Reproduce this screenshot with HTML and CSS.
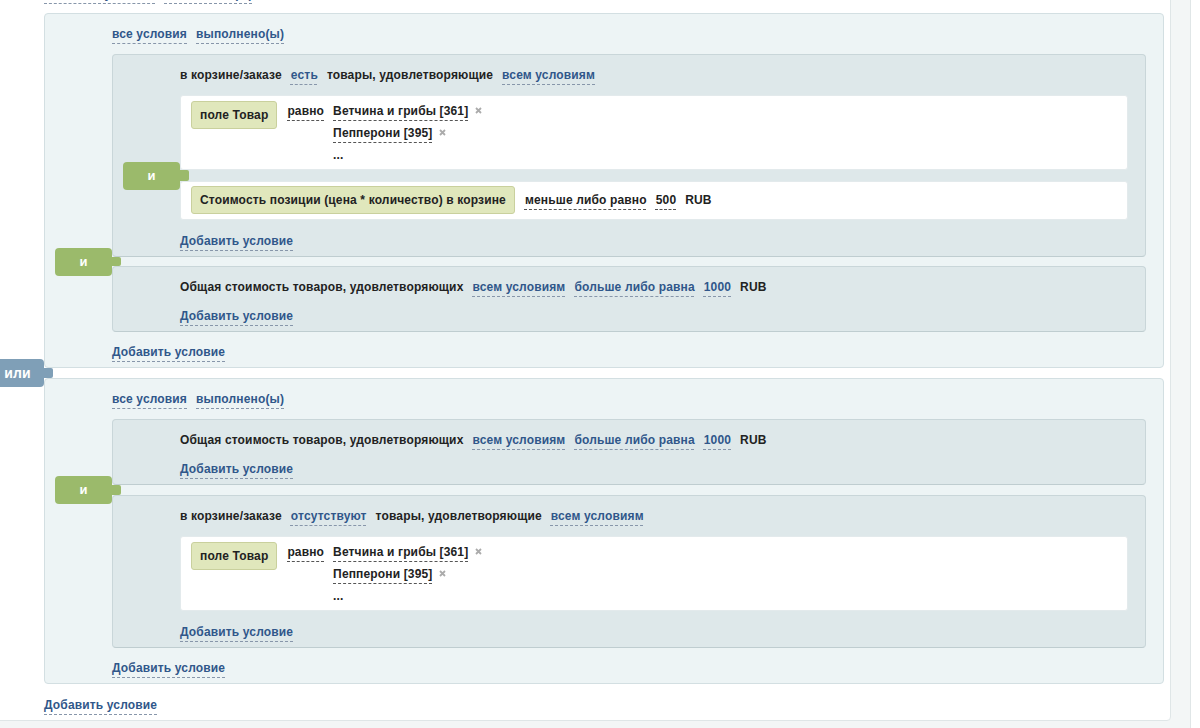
FILE: index.html
```html
<!DOCTYPE html>
<html lang="ru">
<head>
<meta charset="UTF-8">
<meta name="viewport" content="width=device-width, initial-scale=1.0">
<title>Условия правила работы с корзиной</title>
<link rel="stylesheet" href="styles.css">
</head>
<body>
<div class="page">
    <!-- top level: groups joined by "или" -->
    <div class="cond-root">
        <div class="cond-head">
            <span class="lnk">любое из условий</span>
            <span class="lnk">выполнено(ы)</span>
        </div>

        <!-- group 1 -->
        <div class="cond-group">
            <div class="cond-head">
                <span class="lnk">все условия</span>
                <span class="lnk">выполнено(ы)</span>
            </div>

            <div class="cond-box">
                <div class="cond-head">
                    <span>в корзине/заказе</span>
                    <span class="lnk">есть</span>
                    <span>товары, удовлетворяющие</span>
                    <span class="lnk">всем условиям</span>
                </div>
                <div class="leaf">
                    <span class="field">поле Товар</span>
                    <span class="op"><span class="dsh">равно</span></span>
                    <div class="values">
                        <div><span class="dsh">Ветчина и грибы [361]</span><svg class="del" width="7" height="7" viewBox="0 0 7 7"><path d="M1 1l5 5M6 1l-5 5"/></svg></div>
                        <div><span class="dsh">Пепперони [395]</span><svg class="del" width="7" height="7" viewBox="0 0 7 7"><path d="M1 1l5 5M6 1l-5 5"/></svg></div>
                        <div>...</div>
                    </div>
                </div>
                <div class="sep"><span class="logic">и</span></div>
                <div class="leaf leaf-line">
                    <span class="field">Стоимость позиции (цена * количество) в корзине</span>
                    <span class="dsh">меньше либо равно</span>
                    <span class="dsh">500</span>
                    <span>RUB</span>
                </div>
                <div class="cond-add"><span class="lnk">Добавить условие</span></div>
            </div>

            <div class="sep"><span class="logic">и</span></div>

            <div class="cond-box">
                <div class="cond-head">
                    <span>Общая стоимость товаров, удовлетворяющих</span>
                    <span class="lnk">всем условиям</span>
                    <span class="lnk">больше либо равна</span>
                    <span class="lnk">1000</span>
                    <span>RUB</span>
                </div>
                <div class="cond-add"><span class="lnk">Добавить условие</span></div>
            </div>

            <div class="cond-add"><span class="lnk">Добавить условие</span></div>
        </div>

        <div class="sep sep-or"><span class="logic">или</span></div>

        <!-- group 2 -->
        <div class="cond-group">
            <div class="cond-head">
                <span class="lnk">все условия</span>
                <span class="lnk">выполнено(ы)</span>
            </div>

            <div class="cond-box">
                <div class="cond-head">
                    <span>Общая стоимость товаров, удовлетворяющих</span>
                    <span class="lnk">всем условиям</span>
                    <span class="lnk">больше либо равна</span>
                    <span class="lnk">1000</span>
                    <span>RUB</span>
                </div>
                <div class="cond-add"><span class="lnk">Добавить условие</span></div>
            </div>

            <div class="sep sep-wide"><span class="logic">и</span></div>

            <div class="cond-box">
                <div class="cond-head">
                    <span>в корзине/заказе</span>
                    <span class="lnk">отсутствуют</span>
                    <span>товары, удовлетворяющие</span>
                    <span class="lnk">всем условиям</span>
                </div>
                <div class="leaf">
                    <span class="field">поле Товар</span>
                    <span class="op"><span class="dsh">равно</span></span>
                    <div class="values">
                        <div><span class="dsh">Ветчина и грибы [361]</span><svg class="del" width="7" height="7" viewBox="0 0 7 7"><path d="M1 1l5 5M6 1l-5 5"/></svg></div>
                        <div><span class="dsh">Пепперони [395]</span><svg class="del" width="7" height="7" viewBox="0 0 7 7"><path d="M1 1l5 5M6 1l-5 5"/></svg></div>
                        <div>...</div>
                    </div>
                </div>
                <div class="cond-add"><span class="lnk">Добавить условие</span></div>
            </div>

            <div class="cond-add"><span class="lnk">Добавить условие</span></div>
        </div>

        <div class="cond-add"><span class="lnk">Добавить условие</span></div>
    </div>
</div>
</body>
</html>
```

FILE: styles.css
```css
body {
    margin: 0;
    background: #fff;
    font-family: "Liberation Sans", Arial, Helvetica, sans-serif;
    font-size: 12px;
    font-weight: bold;
    letter-spacing: 0.15px;
    color: #222;
    overflow: hidden;
}

.page {
    width: 1190px;
    min-height: 780px;
    background: #f3f6f6;
    border-right: 1px solid #e0e6e7;
}

/* dashed "links" */
.lnk,
.dsh {
    text-decoration: underline dashed;
    text-decoration-thickness: 1px;
    text-underline-offset: 5px;
    text-decoration-skip-ink: none;
    white-space: nowrap;
}

.lnk {
    color: #30578a;
    text-decoration-color: #8796aa;
}

.dsh {
    color: #222;
    text-decoration-color: #555;
}

/* containers */
.cond-root {
    margin: -26px 19px 0 -24px;
    padding: 11px 6px 7px 67px;
    background: #fff;
    border: 1px solid #dfe6e7;
    border-radius: 4px;
}

.cond-group {
    padding: 12px 17px 7px 67px;
    background: #edf4f5;
    border: 1px solid #d3dfe2;
    border-radius: 4px;
}

.cond-box {
    padding: 12px 17px 7px 67px;
    background: #dee8ea;
    border: 1px solid #c9d6d9;
    border-bottom-color: #bfcdd0;
    border-radius: 4px;
}

.cond-head {
    display: flex;
    gap: 9px;
    height: 16px;
    line-height: 16px;
    margin-bottom: 12px;
    white-space: nowrap;
}

.cond-root > .cond-head {
    margin-bottom: 11px;
}

.cond-add {
    line-height: 16px;
    margin-top: 13px;
}

.cond-group > .cond-add {
    margin-top: 12px;
}

/* leaf conditions */
.leaf {
    display: flex;
    align-items: flex-start;
    gap: 9px;
    padding: 4px 10px 5px;
    background: #fff;
    border: 1px solid #e3eaec;
    border-radius: 3px;
    white-space: nowrap;
}

.leaf-line {
    align-items: center;
}

.field {
    height: 26px;
    line-height: 26px;
    margin: 1px 1px 0 0;
    padding: 0 8px;
    background: #e0e7bc;
    border: 1px solid #c9d09d;
    border-radius: 3px;
    color: #222;
}

.leaf-line .field {
    margin-top: 0;
}

.op {
    line-height: 22px;
    margin-top: 0;
}

.leaf-line .dsh {
    line-height: 16px;
}

.values {
    line-height: 22px;
    margin-bottom: -2px;
}

.del {
    margin-left: 7px;
    vertical-align: 1px;
}

.del path {
    stroke: #ababab;
    stroke-width: 1.8;
}

/* "и" / "или" connectors */
.sep {
    position: relative;
    height: 10px;
}

.cond-group > .sep {
    height: 9px;
}

.cond-group > .sep-wide {
    height: 10px;
}

.cond-box > .sep {
    height: 11px;
}

.sep::before {
    content: "";
    position: absolute;
    left: 0;
    top: 0;
    bottom: 0;
    width: 9px;
    background: #9bba6b;
    border-radius: 0 2px 2px 0;
}

.logic {
    position: absolute;
    right: 100%;
    top: 50%;
    margin-top: -14px;
    width: 57px;
    height: 28px;
    line-height: 28px;
    text-align: center;
    font-size: 13px;
    color: #fff;
    background: #9bba6b;
    border-radius: 4px;
}

.sep-or::before,
.sep-or .logic {
    background: #7f9fb7;
}

.sep-or .logic {
    font-size: 14px;
    text-indent: 4px;
}
```
